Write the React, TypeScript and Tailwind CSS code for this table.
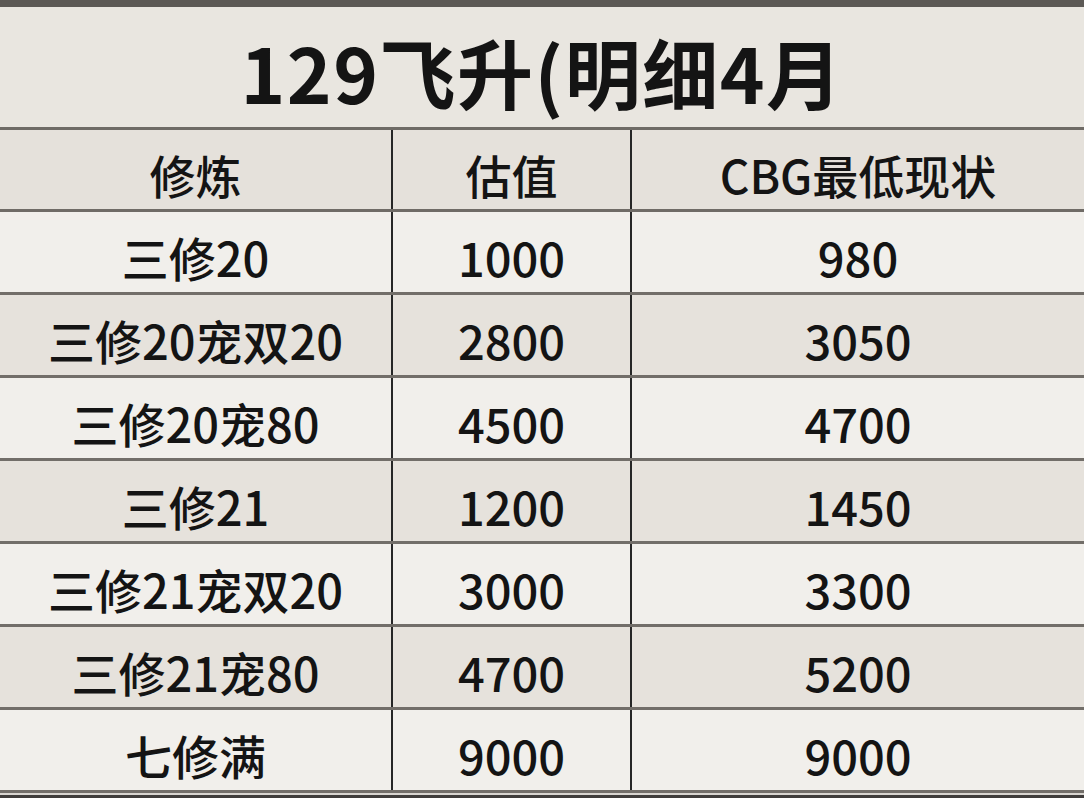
import React from "react";

const rows = [
  { name: "三修20", est: "1000", cbg: "980", dark: false },
  { name: "三修20宠双20", est: "2800", cbg: "3050", dark: true },
  { name: "三修20宠80", est: "4500", cbg: "4700", dark: false },
  { name: "三修21", est: "1200", cbg: "1450", dark: true },
  { name: "三修21宠双20", est: "3000", cbg: "3300", dark: false },
  { name: "三修21宠80", est: "4700", cbg: "5200", dark: true },
  { name: "七修满", est: "9000", cbg: "9000", dark: false },
];

const font = { fontFamily: '"Noto Sans CJK SC", "Noto Sans", sans-serif' };

export default function App() {
  return (
    <div
      className="w-[1084px] h-[798px] overflow-hidden bg-[#e9e6e0] text-[#141414] flex flex-col"
      style={font}
    >
      {/* top frame edge */}
      <div className="h-[7px] shrink-0 bg-[#5c5955]" />

      {/* title */}
      <div className="h-[123px] shrink-0 flex items-center justify-center pt-2 bg-[#e9e6e0] border-b-[3px] border-[#6f6b66]">
        <h1 className="text-[76px] font-bold leading-none tracking-[1.5px]">129飞升(明细4月</h1>
      </div>

      {/* header */}
      <div className="h-[82px] shrink-0 grid grid-cols-[393px_239px_1fr] bg-[#e5e1db] border-b-[3px] border-[#6f6b66] text-[46px] font-medium leading-none">
        <div className="flex items-center justify-center pt-2 border-r-2 border-[#262626]">修炼</div>
        <div className="flex items-center justify-center pt-2 border-r-2 border-[#262626]">估值</div>
        <div className="flex items-center justify-center pt-2">CBG最低现状</div>
      </div>

      {rows.map((r) => (
        <div
          key={r.name}
          className={`h-[83px] shrink-0 grid grid-cols-[393px_239px_1fr] border-b-[3px] border-[#726e69] text-[47px] font-medium leading-none ${
            r.dark ? "bg-[#e6e2dc]" : "bg-[#f1efeb]"
          }`}
        >
          <div className="flex items-center justify-center pt-2 border-r-2 border-[#262626]">{r.name}</div>
          <div className="flex items-center justify-center pt-2 border-r-2 border-[#262626]">{r.est}</div>
          <div className="flex items-center justify-center pt-2">{r.cbg}</div>
        </div>
      ))}

      {/* bottom frame edge */}
      <div className="flex-1 bg-[#3f3d3b] border-t-2 border-[#d8d5d0]" />
    </div>
  );
}
